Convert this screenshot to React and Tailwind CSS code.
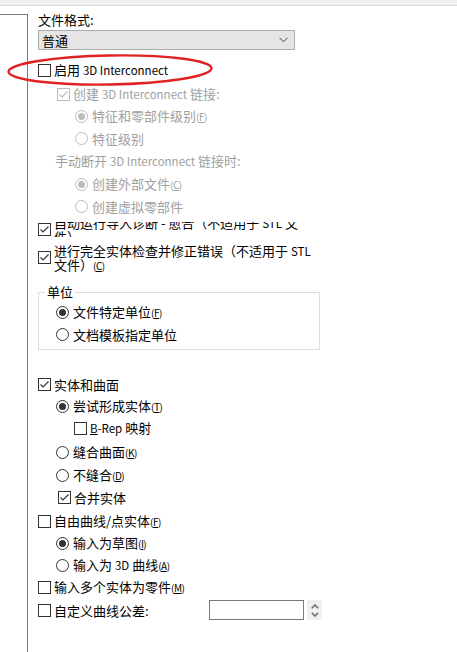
import React from 'react';

const Box = ({ checked, disabled }) => (
    <span
        className={`w-[13px] h-[13px] shrink-0 border bg-white flex items-center justify-center ${
            disabled ? 'border-[#bcbcbc]' : 'border-[#333333]'
        }`}
    >
        {checked && (
            <svg width="11" height="11" viewBox="0 0 11 11">
                <path
                    d="M1.5 5.5 L4 8 L9.5 2.5"
                    fill="none"
                    stroke={disabled ? '#bcbcbc' : '#333333'}
                    strokeWidth="1.1"
                />
            </svg>
        )}
    </span>
);

const Radio = ({ checked, disabled }) => (
    <span
        className={`w-[13px] h-[13px] shrink-0 rounded-full border bg-white flex items-center justify-center ${
            disabled ? 'border-[#bcbcbc]' : 'border-[#333333]'
        }`}
    >
        {checked && (
            <span className={`w-[7px] h-[7px] rounded-full ${disabled ? 'bg-[#bcbcbc]' : 'bg-[#333333]'}`} />
        )}
    </span>
);

// latin words sit a bit smaller than the CJK glyphs
const E = ({ children }) => <span className="text-[11.5px]">{children}</span>;

// access key, e.g. (F)
const K = ({ k }) => (
    <span className="text-[10px] tracking-[-0.5px]">
        (<span className="underline">{k}</span>)
    </span>
);

const Row = ({ className = '', children }) => (
    <div className={`flex items-center h-[22px] ${className}`}>{children}</div>
);

const Check = ({ checked, disabled, className, children }) => (
    <Row className={className}>
        <Box checked={checked} disabled={disabled} />
        <span className={`ml-[3px] leading-[15px] whitespace-nowrap ${disabled ? 'text-[#a0a0a0]' : ''}`}>
            {children}
        </span>
    </Row>
);

const Option = ({ checked, disabled, className, children }) => (
    <Row className={className}>
        <Radio checked={checked} disabled={disabled} />
        <span className={`ml-[4px] leading-[15px] whitespace-nowrap ${disabled ? 'text-[#a0a0a0]' : ''}`}>
            {children}
        </span>
    </Row>
);

const App = () => {
    return (
        <div className="relative w-[457px] h-[652px] overflow-hidden bg-white text-[13px] text-black font-['Noto_Sans_CJK_SC','Noto_Sans',sans-serif] flex flex-col">
            <div className="h-[6px] bg-[#f0f0f0] border-b border-[#dadada] shrink-0" />

            <div className="flex flex-1">
                <div className="w-[28px] mt-[8px] border-t border-r border-[#7a7a7a] shrink-0" />

                <div className="pl-[10px] flex flex-col">
                    <div className="mt-[6px] h-[15px] leading-[15px]">文件格式:</div>

                    <div className="mt-[3px] w-[257px] h-[20px] bg-[#e5e5e5] border border-[#adadad] flex items-center justify-between pl-[3px] pr-[6px]">
                        <span className="leading-[15px]">普通</span>
                        <svg width="9" height="6" viewBox="0 0 9 6">
                            <path d="M0.5 0.8 L4.5 4.8 L8.5 0.8" fill="none" stroke="#444444" strokeWidth="1" />
                        </svg>
                    </div>

                    <Check className="mt-[9px]">
                        启用 <E>3D Interconnect</E>
                    </Check>

                    <div className="pl-[19px] flex flex-col">
                        <Check checked disabled className="mt-[2px]">
                            创建 <E>3D Interconnect</E> 链接:
                        </Check>
                        <div className="pl-[18px] flex flex-col">
                            <Option checked disabled>
                                特征和零部件级别<K k="F" />
                            </Option>
                            <Option disabled>特征级别</Option>
                        </div>
                    </div>

                    <Row className="mt-[1px] pl-[17px]">
                        <span className="text-[#a0a0a0] leading-[15px]">
                            手动断开 <E>3D Interconnect</E> 链接时:
                        </span>
                    </Row>
                    <div className="pl-[37px] flex flex-col">
                        <Option checked disabled className="mt-[1px]">
                            创建外部文件<K k="C" />
                        </Option>
                        <Option disabled>创建虚拟零部件</Option>
                    </div>

                    <Row className="mt-[1px]">
                        <Box checked />
                        <div className="ml-[3px] h-[15px] overflow-hidden flex items-center">
                            <div className="leading-[13px] whitespace-nowrap">
                                自动运行导入诊断 - 愈合（不适用于 <E>STL</E> 文<br />件）
                            </div>
                        </div>
                    </Row>

                    <div className="h-[35px] flex items-center">
                        <Box checked />
                        <div className="ml-[3px] leading-[13px] whitespace-nowrap">
                            进行完全实体检查并修正错误（不适用于 <E>STL</E>
                            <br />
                            文件）<K k="C" />
                        </div>
                    </div>

                    <fieldset className="mt-[9px] w-[282px] border border-[#dcdcdc]">
                        <legend className="ml-[6px] px-[2px] leading-[16px]">单位</legend>
                        <div className="pl-[17px] pb-[4px] flex flex-col">
                            <Option checked className="mt-[1px]">
                                文件特定单位<K k="F" />
                            </Option>
                            <Option className="h-[21px]">文档模板指定单位</Option>
                        </div>
                    </fieldset>

                    <Check checked className="mt-[23px]">实体和曲面</Check>
                    <div className="pl-[18px] flex flex-col">
                        <Option checked>
                            尝试形成实体<K k="T" />
                        </Option>
                        <Check className="pl-[18px]">
                            <E>
                                <span className="underline">B</span>-Rep
                            </E>{' '}
                            映射
                        </Check>
                        <Option className="mt-[2px]">
                            缝合曲面<K k="K" />
                        </Option>
                        <Option className="mt-[1px]">
                            不缝合<K k="D" />
                        </Option>
                        <Check checked className="pl-[2px]">合并实体</Check>
                    </div>

                    <Check className="mt-[2px]">
                        自由曲线/点实体<K k="F" />
                    </Check>
                    <div className="pl-[18px] flex flex-col">
                        <Option checked className="h-[21px]">
                            输入为草图<K k="I" />
                        </Option>
                        <Option>
                            输入为 <E>3D</E> 曲线<K k="A" />
                        </Option>
                    </div>

                    <Check>
                        输入多个实体为零件<K k="M" />
                    </Check>

                    <Row className="mt-[1px]">
                        <Box />
                        <span className="ml-[3px] w-[155px] leading-[15px]">自定义曲线公差:</span>
                        <div className="w-[95px] h-[20px] border border-[#7a7a7a] bg-white" />
                        <div className="ml-[3px] w-[15px] h-[20px] bg-[#f0f0f0] flex flex-col items-center justify-center gap-[3px]">
                            <svg width="8" height="5" viewBox="0 0 8 5">
                                <path d="M0.8 4.3 L4 1 L7.2 4.3" fill="none" stroke="#6d6d6d" strokeWidth="1.6" />
                            </svg>
                            <svg width="8" height="5" viewBox="0 0 8 5">
                                <path d="M0.8 0.7 L4 4 L7.2 0.7" fill="none" stroke="#6d6d6d" strokeWidth="1.6" />
                            </svg>
                        </div>
                    </Row>
                </div>
            </div>

            {/* red highlight ellipse drawn over the dialog */}
            <svg className="absolute left-0 top-0 pointer-events-none" width="457" height="652">
                <ellipse
                    cx="110"
                    cy="70"
                    rx="101.5"
                    ry="14.5"
                    transform="rotate(-1 110 70)"
                    fill="none"
                    stroke="#e02222"
                    strokeWidth="2.4"
                />
            </svg>
        </div>
    );
};

export default App;
